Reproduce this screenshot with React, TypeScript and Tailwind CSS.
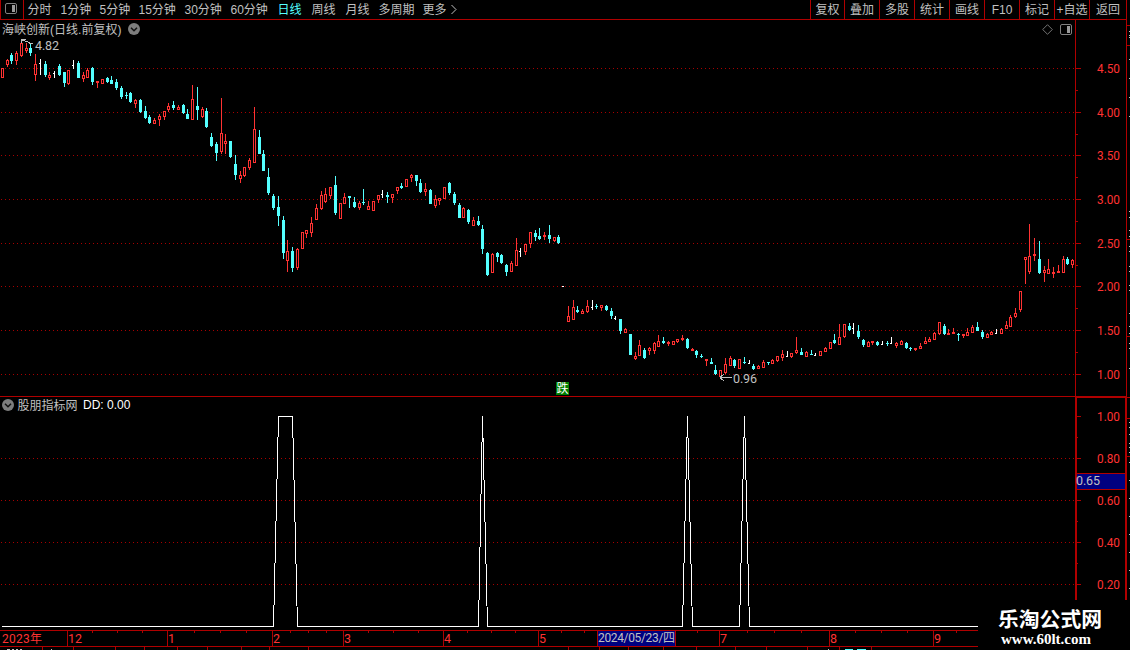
import React from 'react';

type Kind = 'r' | 'c' | 'w';
// x, high, body top, body bottom, low, kind (r = up, c = down, w = flat)
type Candle = [number, number, number, number, number, Kind];

const RED = '#b00000';
const UP = '#ff3232';
const DOWN = '#54ffff';
const GREY = '#c0c0c0';
const CJK = '"Liberation Sans", "Noto Sans CJK SC", sans-serif';
const DIGITS = 'Roboto, "Noto Sans CJK SC", sans-serif';

const candles: Candle[] = [
  [2, 68, 68, 78, 78, 'r'], [7, 59, 60, 65, 67, 'r'], [11, 53, 55, 61, 64, 'c'], [16, 51, 53, 61, 65, 'r'],
  [21, 43, 43, 56, 57, 'r'], [26, 43, 48, 51, 53, 'r'], [30, 43, 48, 53, 56, 'c'], [35, 54, 64, 75, 81, 'r'],
  [40, 59, 63, 64, 75, 'w'], [45, 61, 64, 75, 77, 'c'], [49, 72, 75, 78, 80, 'r'], [54, 71, 73, 74, 78, 'w'],
  [59, 64, 66, 75, 76, 'c'], [64, 72, 72, 83, 87, 'c'], [68, 70, 70, 84, 85, 'r'], [73, 60, 65, 66, 69, 'w'],
  [78, 61, 63, 78, 78, 'c'], [83, 72, 75, 79, 82, 'r'], [87, 68, 70, 78, 78, 'r'], [92, 67, 68, 82, 85, 'c'],
  [97, 81, 81, 83, 88, 'r'], [102, 79, 79, 84, 84, 'r'], [107, 77, 78, 82, 83, 'c'], [111, 76, 80, 84, 84, 'c'],
  [116, 79, 82, 88, 90, 'c'], [121, 86, 88, 97, 99, 'c'], [126, 92, 95, 96, 99, 'c'], [130, 92, 93, 102, 103, 'c'],
  [135, 99, 100, 104, 108, 'r'], [140, 99, 100, 112, 113, 'c'], [145, 106, 111, 118, 119, 'c'], [149, 115, 117, 123, 124, 'c'],
  [154, 118, 120, 124, 124, 'r'], [159, 114, 116, 120, 126, 'r'], [164, 111, 111, 117, 120, 'r'], [168, 103, 106, 110, 112, 'r'],
  [173, 101, 105, 108, 110, 'c'], [178, 105, 107, 110, 110, 'r'], [183, 104, 105, 113, 114, 'c'], [187, 109, 114, 119, 119, 'c'],
  [192, 85, 99, 120, 120, 'r'], [197, 87, 106, 110, 120, 'c'], [202, 107, 109, 117, 118, 'r'], [206, 108, 111, 127, 128, 'c'],
  [211, 133, 137, 146, 147, 'c'], [216, 142, 144, 153, 161, 'c'], [221, 98, 133, 152, 154, 'r'], [225, 134, 141, 144, 154, 'r'],
  [230, 141, 141, 157, 158, 'c'], [235, 155, 164, 175, 180, 'c'], [240, 171, 175, 179, 183, 'r'], [244, 167, 167, 176, 177, 'r'],
  [249, 158, 160, 168, 170, 'r'], [254, 107, 129, 163, 163, 'r'], [259, 130, 137, 154, 154, 'c'], [263, 150, 154, 171, 171, 'c'],
  [268, 168, 177, 193, 195, 'c'], [273, 194, 196, 208, 210, 'c'], [278, 196, 207, 216, 226, 'c'], [283, 216, 220, 253, 259, 'c'],
  [287, 240, 251, 261, 272, 'r'], [292, 247, 251, 268, 272, 'c'], [297, 248, 249, 268, 270, 'r'], [302, 232, 232, 249, 249, 'r'],
  [306, 230, 230, 234, 238, 'r'], [311, 217, 223, 233, 237, 'r'], [316, 204, 208, 220, 220, 'r'], [321, 191, 195, 209, 210, 'r'],
  [325, 188, 194, 202, 203, 'r'], [330, 187, 187, 196, 199, 'r'], [335, 176, 185, 213, 215, 'c'], [340, 203, 203, 219, 219, 'r'],
  [344, 193, 197, 204, 204, 'r'], [349, 196, 196, 198, 208, 'c'], [354, 197, 202, 207, 208, 'c'], [359, 201, 203, 208, 210, 'r'],
  [363, 189, 202, 203, 205, 'c'], [368, 201, 206, 210, 210, 'r'], [373, 201, 201, 211, 211, 'r'], [378, 195, 195, 200, 203, 'r'],
  [382, 190, 194, 195, 198, 'w'], [387, 192, 195, 197, 203, 'c'], [392, 194, 194, 198, 203, 'r'], [397, 187, 187, 191, 194, 'r'],
  [401, 183, 186, 188, 189, 'c'], [406, 179, 179, 187, 187, 'r'], [411, 174, 175, 178, 182, 'r'], [416, 175, 175, 181, 186, 'c'],
  [420, 179, 183, 192, 193, 'c'], [425, 183, 189, 192, 196, 'r'], [430, 189, 190, 204, 204, 'c'], [435, 195, 199, 206, 208, 'r'],
  [439, 198, 198, 201, 205, 'r'], [444, 187, 187, 199, 199, 'r'], [449, 182, 183, 193, 195, 'c'], [454, 192, 194, 203, 205, 'c'],
  [459, 203, 205, 218, 218, 'c'], [463, 207, 208, 218, 218, 'r'], [468, 209, 210, 222, 224, 'c'], [473, 217, 220, 226, 226, 'r'],
  [478, 216, 221, 225, 226, 'c'], [482, 225, 229, 249, 254, 'c'], [487, 252, 253, 275, 276, 'c'], [492, 253, 254, 273, 273, 'r'],
  [497, 252, 253, 257, 262, 'c'], [501, 254, 255, 263, 264, 'c'], [506, 264, 265, 272, 276, 'c'], [511, 261, 263, 272, 272, 'r'],
  [516, 238, 250, 266, 266, 'r'], [520, 248, 251, 252, 257, 'w'], [525, 244, 244, 252, 255, 'r'], [530, 232, 232, 244, 248, 'r'],
  [535, 230, 233, 237, 241, 'c'], [539, 228, 236, 239, 240, 'c'], [544, 232, 235, 237, 240, 'r'], [549, 225, 235, 239, 243, 'c'],
  [554, 237, 237, 241, 242, 'r'], [558, 235, 237, 243, 244, 'c'], [563, 286, 286, 287, 287, 'w'], [568, 306, 316, 322, 322, 'r'],
  [573, 300, 307, 320, 320, 'r'], [577, 306, 310, 312, 313, 'c'], [582, 309, 311, 314, 314, 'r'], [587, 300, 306, 312, 313, 'r'],
  [592, 300, 307, 308, 310, 'w'], [596, 304, 306, 307, 309, 'c'], [601, 305, 305, 308, 311, 'r'], [606, 305, 306, 310, 311, 'c'],
  [611, 308, 311, 316, 319, 'c'], [615, 316, 318, 319, 320, 'w'], [620, 319, 319, 331, 334, 'c'], [625, 328, 329, 333, 333, 'r'],
  [630, 334, 334, 355, 355, 'c'], [635, 352, 356, 359, 360, 'r'], [639, 340, 345, 356, 356, 'r'], [644, 348, 350, 358, 359, 'c'],
  [649, 347, 348, 351, 355, 'r'], [654, 342, 343, 351, 354, 'r'], [658, 335, 341, 347, 347, 'r'], [663, 337, 341, 343, 344, 'c'],
  [668, 341, 342, 344, 346, 'r'], [673, 341, 341, 345, 345, 'r'], [677, 339, 339, 342, 343, 'r'], [682, 335, 338, 340, 341, 'r'],
  [687, 338, 339, 348, 349, 'c'], [692, 348, 349, 351, 351, 'r'], [696, 350, 351, 355, 358, 'c'], [701, 354, 356, 357, 358, 'c'],
  [706, 359, 359, 361, 366, 'r'], [711, 358, 362, 364, 364, 'c'], [715, 365, 370, 374, 375, 'c'], [720, 370, 370, 377, 377, 'r'],
  [725, 358, 364, 373, 374, 'r'], [730, 356, 358, 366, 366, 'r'], [734, 359, 360, 366, 368, 'c'], [739, 359, 359, 369, 369, 'r'],
  [744, 357, 362, 363, 364, 'c'], [749, 360, 363, 364, 364, 'w'], [753, 364, 366, 369, 370, 'c'], [758, 365, 366, 369, 369, 'r'],
  [763, 360, 362, 368, 368, 'r'], [768, 362, 362, 363, 365, 'c'], [772, 359, 360, 364, 364, 'r'], [777, 356, 356, 361, 362, 'r'],
  [782, 350, 354, 358, 361, 'r'], [787, 351, 356, 357, 357, 'w'], [791, 353, 353, 357, 358, 'r'], [796, 337, 350, 353, 354, 'r'],
  [801, 348, 352, 355, 355, 'c'], [806, 351, 352, 357, 357, 'r'], [811, 350, 354, 355, 355, 'c'], [815, 353, 355, 356, 356, 'w'],
  [820, 351, 351, 356, 356, 'r'], [825, 347, 348, 352, 352, 'r'], [830, 342, 342, 349, 349, 'r'], [834, 334, 340, 343, 344, 'c'],
  [839, 324, 337, 345, 345, 'r'], [844, 324, 324, 337, 338, 'r'], [849, 323, 326, 330, 331, 'c'], [853, 323, 328, 329, 334, 'w'],
  [858, 325, 331, 337, 339, 'c'], [863, 339, 340, 345, 347, 'c'], [868, 341, 342, 347, 347, 'r'], [872, 341, 341, 343, 345, 'r'],
  [877, 341, 342, 345, 346, 'c'], [882, 341, 344, 345, 345, 'w'], [887, 341, 343, 344, 346, 'c'], [891, 337, 343, 344, 344, 'w'],
  [896, 342, 343, 346, 348, 'r'], [901, 340, 341, 345, 345, 'r'], [906, 342, 343, 348, 349, 'c'], [910, 347, 348, 349, 351, 'c'],
  [915, 348, 348, 350, 351, 'r'], [920, 343, 346, 349, 349, 'r'], [925, 337, 341, 344, 344, 'r'], [929, 337, 339, 342, 342, 'r'],
  [934, 332, 333, 340, 340, 'r'], [939, 322, 322, 334, 335, 'r'], [944, 324, 326, 334, 335, 'c'], [948, 329, 333, 335, 335, 'r'],
  [953, 328, 332, 334, 334, 'r'], [958, 333, 334, 335, 341, 'c'], [963, 334, 334, 336, 338, 'r'], [967, 328, 332, 336, 336, 'r'],
  [972, 325, 327, 333, 333, 'r'], [977, 322, 327, 331, 331, 'c'], [982, 330, 332, 337, 339, 'c'], [987, 333, 334, 338, 338, 'r'],
  [991, 331, 332, 335, 335, 'r'], [996, 329, 333, 334, 334, 'w'], [1001, 328, 329, 334, 334, 'r'], [1006, 321, 325, 329, 329, 'r'],
  [1010, 315, 317, 327, 327, 'r'], [1015, 308, 313, 317, 318, 'r'], [1020, 291, 291, 310, 312, 'r'], [1025, 257, 257, 260, 284, 'r'],
  [1029, 224, 256, 272, 274, 'r'], [1034, 238, 254, 256, 261, 'r'], [1039, 241, 259, 273, 274, 'c'], [1044, 266, 270, 273, 282, 'r'],
  [1048, 259, 269, 274, 274, 'r'], [1053, 267, 272, 274, 278, 'r'], [1058, 265, 271, 273, 273, 'r'], [1063, 256, 259, 273, 273, 'r'],
  [1067, 257, 259, 264, 265, 'c'], [1072, 259, 260, 265, 268, 'r'],
];

const periods = [
  { label: '分时', cls: 'w-[33px]' },
  { label: '1分钟', cls: 'w-[39px]' },
  { label: '5分钟', cls: 'w-[39px]' },
  { label: '15分钟', cls: 'w-[46px]' },
  { label: '30分钟', cls: 'w-[46px]' },
  { label: '60分钟', cls: 'w-[47px]' },
  { label: '日线', cls: 'w-[34px] text-[#54ffff]' },
  { label: '周线', cls: 'w-[34px]' },
  { label: '月线', cls: 'w-[33px]' },
  { label: '多周期', cls: 'w-[44px]' },
  { label: '更多', cls: 'w-[27px]' },
];

const tools = ['复权', '叠加', '多股', '统计', '画线', 'F10', '标记', '+自选', '返回'];

const priceTicks: [number, string][] = [
  [68, '4.50'], [112, '4.00'], [155, '3.50'], [199, '3.00'], [243, '2.50'], [286, '2.00'], [330, '1.50'], [374, '1.00'],
];
const priceMinor = [90, 134, 177, 221, 265, 308, 352];

const ddTicks: [number, string][] = [[416, '1.00'], [458, '0.80'], [500, '0.60'], [542, '0.40'], [584, '0.20']];
const ddMinor = [437, 521, 563];

const months: [number, string][] = [
  [67, '12'], [167, '1'], [272, '2'], [343, '3'], [443, '4'], [538, '5'], [719, '7'], [829, '8'], [933, '9'],
];
const weekTicks = [92, 117, 142, 194, 220, 246, 290, 308, 326, 368, 393, 418, 467, 491, 515, 561, 584, 697, 747, 774, 801, 855, 881, 907, 956];
const footTicks = [42, 73, 115, 144, 177, 207, 241, 269, 308, 568, 599, 628, 663, 696, 735, 766, 807, 839, 871];

const edgeMarks = [
  31, 35, 37, 59, 78, 97, 116, 211, 217, 230, 236, 246, 251, 266, 271, 285, 290, 313, 326, 333, 343, 348, 368,
  422, 427, 434, 443, 447, 452, 462, 480, 498, 516, 534, 552, 570, 588,
];
const edgeLines = [25, 45, 239, 336, 397, 418, 456];

function CandleShape({ c }: { c: Candle }) {
  const [x, high, top, bottom, low, kind] = c;
  if (kind === 'w') {
    return (
      <g fill="#fff">
        <rect x={x} y={high} width={1} height={low - high} />
        <rect x={x - 1} y={top} width={1} height={1} />
      </g>
    );
  }
  if (kind === 'c') {
    return (
      <g fill={DOWN}>
        <rect x={x} y={high} width={1} height={low - high} />
        <rect x={x - 1} y={top} width={3} height={bottom - top} />
      </g>
    );
  }
  return (
    <g fill={UP}>
      <rect x={x} y={high} width={1} height={low - high} />
      <rect x={x - 1} y={top} width={3} height={bottom - top} />
      {bottom - top > 2 && <rect x={x} y={top + 1} width={1} height={bottom - top - 2} fill="#000" />}
    </g>
  );
}

function GridLine({ y }: { y: number }) {
  return <line x1={1} x2={1075} y1={y + 0.5} y2={y + 0.5} stroke="#a80000" strokeDasharray="1 3" />;
}

function AxisLabel({ y, label }: { y: number; label: string }) {
  return (
    <text x={22} y={y + 5} fill={UP} fontSize={12.5} fontFamily={DIGITS} textLength={23} lengthAdjust="spacingAndGlyphs">
      {label}
    </text>
  );
}

function ChevronDot() {
  return (
    <svg width="12" height="12" viewBox="0 0 12 12" className="block shrink-0">
      <circle cx="6" cy="6" r="6" fill="#7d7d7d" />
      <path d="M3 4.7 6 7.7 9 4.7" fill="none" stroke="#111" strokeWidth="1.5" />
    </svg>
  );
}

function PanelIcon() {
  return (
    <svg width="12" height="11" viewBox="0 0 12 11" className="block shrink-0">
      <rect x="0.5" y="0.5" width="11" height="10" rx="1.5" fill="none" stroke="#808080" />
      <rect x="7" y="2" width="3" height="7" fill="#9a9a9a" />
    </svg>
  );
}

function Toolbar() {
  return (
    <header className="flex h-[20px] w-[1127px] shrink-0 border-b border-[#b00000] text-[12px] leading-[19px]">
      <div className="flex w-[24px] shrink-0 items-center border-x border-[#b00000] pb-[2px] pl-[4px]">
        <PanelIcon />
      </div>
      <nav className="flex flex-1 pl-[3.5px] pt-[0.5px]">
        {periods.map((p) => (
          <span key={p.label} className={`shrink-0 whitespace-nowrap ${p.cls}`}>
            {p.label}
          </span>
        ))}
        <svg width="8" height="18" viewBox="0 0 8 18" className="block">
          <path d="M1.5 4 6 8.5 1.5 13" fill="none" stroke={GREY} />
        </svg>
      </nav>
      <div className="flex w-[317px] shrink-0 border-r border-[#b00000]">
        {tools.map((t, i) => (
          <span
            key={t}
            className={`shrink-0 whitespace-nowrap border-l border-[#b00000] pt-[0.5px] text-center ${
              i === 0 ? 'w-[34px]' : i === 8 ? 'w-[37px]' : 'w-[35px]'
            }`}
          >
            {t}
          </span>
        ))}
      </div>
    </header>
  );
}

function PricePanel() {
  return (
    <section className="relative h-[376px] w-[1075px]">
      <svg width="1075" height="376" viewBox="0 20 1075 376" className="block" shapeRendering="crispEdges">
        {priceTicks.map(([y]) => (
          <GridLine key={y} y={y} />
        ))}
        {candles.map((c) => (
          <CandleShape key={c[0]} c={c} />
        ))}
        {/* high / low markers */}
        <path d="M26 39.5H21.5V43M22 40.5H25M25 41.5H28M28 42.5H30M29 43.5H33" fill="none" stroke={GREY} />
        <path d="M720 377.5H732M720.5 377 724 374M720.5 378 724 381" fill="none" stroke={GREY} />
        <text x={35} y={50} fill={GREY} fontSize={12.5} fontFamily={DIGITS} textLength={24}>4.82</text>
        <text x={733} y={383} fill={GREY} fontSize={12.5} fontFamily={DIGITS} textLength={24}>0.96</text>
        <rect x={556} y={382} width={13} height={13} fill="#008000" />
        <text x={556.5} y={393} fill="#fff" fontSize={12} fontFamily={CJK}>跌</text>
      </svg>
      <div className="absolute inset-x-0 top-0 flex h-[18px] items-center pl-[2px] pr-[3px]">
        <span className="w-[126px] whitespace-nowrap pt-[1px] text-[12px] leading-[18px]">
          海峡创新<span>(</span>日线<span>.</span>前复权<span>)</span>
        </span>
        <ChevronDot />
        <svg width="11" height="11" viewBox="0 0 11 11" className="ml-auto mr-[7px] block">
          <path d="M5.5 0.7 10.3 5.5 5.5 10.3 0.7 5.5Z" fill="none" stroke="#808080" strokeWidth="0.9" />
        </svg>
        <PanelIcon />
      </div>
    </section>
  );
}

function IndicatorPanel() {
  return (
    <section className="relative h-[234px] w-[1075px]">
      <svg width="1075" height="234" viewBox="0 396 1075 234" className="block" shapeRendering="crispEdges">
        <rect x={0} y={396} width={1075} height={1} fill={RED} />
        {ddTicks.slice(1).map(([y]) => (
          <GridLine key={y} y={y} />
        ))}
        <polyline
          fill="none"
          stroke="#fff"
          points="2,626.5 273.5,626.5 278.5,416.5 292.5,416.5 297.5,626.5 478.5,626.5 482.5,416.5 487.5,626.5 682.5,626.5 687.5,416.5 692.5,626.5 739.5,626.5 744.5,416.5 749.5,626.5 978,626.5"
        />
      </svg>
      <div className="absolute left-[2px] top-0 flex h-[18px] items-center text-[12px] leading-[18px]">
        <ChevronDot />
        <span className="ml-[3.5px] w-[65.5px] whitespace-nowrap pt-[1px]">股朋指标网</span>
        <span className="whitespace-nowrap text-white">DD: 0.00</span>
      </div>
    </section>
  );
}

function ValueAxis() {
  return (
    <svg width="55" height="610" viewBox="0 20 55 610" className="block" shapeRendering="crispEdges">
      <g fill={RED}>
        <rect x={0} y={20} width={1} height={376} />
        <rect x={51} y={20} width={1} height={376} />
        <rect x={0} y={396} width={52} height={2} />
        <rect x={0} y={396} width={2} height={204} />
        <rect x={50} y={396} width={2} height={204} />
        {priceTicks.map(([y]) => (
          <rect key={y} x={1} y={y} width={5} height={1} />
        ))}
        {priceMinor.map((y) => (
          <rect key={y} x={1} y={y} width={2} height={1} />
        ))}
        {ddTicks.map(([y]) => (
          <rect key={y} x={2} y={y} width={4} height={1} />
        ))}
        {ddMinor.map((y) => (
          <rect key={y} x={2} y={y} width={1} height={1} />
        ))}
        {edgeLines.map((y) => (
          <rect key={y} x={52} y={y} width={3} height={1} />
        ))}
        <rect x={2} y={473} width={48} height={17} />
      </g>
      <rect x={2} y={474} width={48} height={15} fill="#000080" />
      {edgeMarks.map((y) => (
        <rect key={y} x={54} y={y} width={1} height={1} fill={GREY} />
      ))}
      {[...priceTicks, ...ddTicks].map(([y, label]) => (
        <AxisLabel key={y} y={y} label={label} />
      ))}
      <text x={1} y={485} fill={GREY} fontSize={12.5} fontFamily={DIGITS} textLength={24}>0.65</text>
    </svg>
  );
}

function TimeAxis() {
  return (
    <svg width="978" height="20" viewBox="0 630 978 20" className="block" shapeRendering="crispEdges">
      <g fill={RED}>
        <rect x={0} y={630} width={978} height={1} />
        <rect x={0} y={646} width={978} height={1} />
        {months.map(([x]) => (
          <rect key={x} x={x} y={631} width={1} height={15} />
        ))}
        {weekTicks.map((x) => (
          <rect key={x} x={x} y={631} width={1} height={2} />
        ))}
        {footTicks.map((x) => (
          <rect key={x} x={x} y={647} width={1} height={3} />
        ))}
        <rect x={597} y={631} width={79} height={15} />
      </g>
      <rect x={598} y={631} width={77} height={15} fill="#000080" />
      <text x={2} y={643} fill={UP} fontSize={12} fontFamily={DIGITS} textLength={40}>2023年</text>
      {months.map(([x, label]) => (
        <text key={label} x={x + 1} y={643} fill={UP} fontSize={12.5} fontFamily={DIGITS}>
          {label}
        </text>
      ))}
      <text x={598} y={642} fill={GREY} fontSize={12} fontFamily={DIGITS} textLength={77}>2024/05/23/四</text>
      {/* tops of the row below */}
      <g fill={GREY}>
        <rect x={7} y={649} width={3} height={1} />
        <rect x={12} y={649} width={2} height={1} />
        <rect x={16} y={649} width={2} height={1} />
        <rect x={20} y={649} width={2} height={1} />
        <rect x={51} y={649} width={1} height={1} />
        <rect x={828} y={649} width={1} height={1} />
      </g>
      <g fill={DOWN}>
        <rect x={845} y={649} width={8} height={1} />
        <rect x={857} y={649} width={9} height={1} />
      </g>
    </svg>
  );
}

export default function App() {
  return (
    <div className="flex h-[650px] w-[1130px] flex-col overflow-hidden bg-black font-['Liberation_Sans','Noto_Sans_CJK_SC',sans-serif] text-[#c0c0c0]">
      <Toolbar />
      <main className="flex h-[610px] shrink-0">
        <div className="flex w-[1075px] shrink-0 flex-col">
          <PricePanel />
          <IndicatorPanel />
        </div>
        <ValueAxis />
      </main>
      <footer className="flex h-[20px] shrink-0">
        <TimeAxis />
        {/* site mark, reaches up over the indicator panel */}
        <div className="relative w-[152px]">
          <div className="absolute bottom-0 left-0 flex h-[50px] w-[152px] flex-col bg-black pl-[20px] text-white">
            <span className="mt-[9px] whitespace-nowrap text-[20.8px] font-bold leading-[22px]">乐淘公式网</span>
            <span className="-mt-px pl-[3px] font-['Liberation_Serif',serif] text-[15px] font-bold leading-[18px]">www.60lt.com</span>
          </div>
        </div>
      </footer>
    </div>
  );
}
